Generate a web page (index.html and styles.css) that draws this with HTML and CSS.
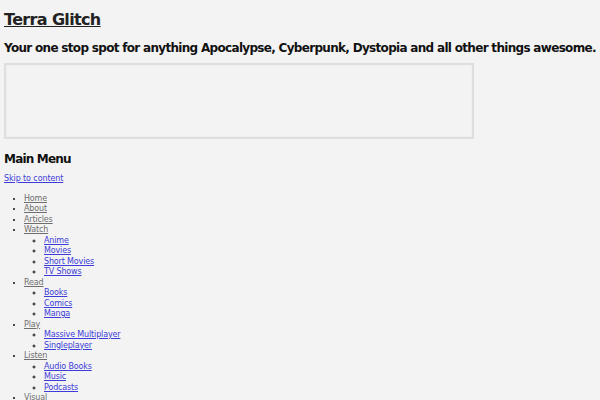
FILE: index.html
```html
<!DOCTYPE html>
<html>
<head>
<meta charset="utf-8">
<link rel="stylesheet" href="styles.css">
</head>
<body>
<header class="site-header">
  <h1 class="site-title"><a href="#">Terra Glitch</a></h1>
  <h2 class="site-desc">Your one stop spot for anything Apocalypse, Cyberpunk, Dystopia and all other things awesome.</h2>
  <div class="ad-frame"></div>
</header>
<nav class="main-nav">
  <h3 class="menu-title">Main Menu</h3>
  <a class="skip" href="#">Skip to content</a>
  <ul class="menu">
    <li><a href="#">Home</a></li>
    <li><a href="#">About</a></li>
    <li><a href="#">Articles</a></li>
    <li><a href="#">Watch</a>
      <ul class="sub">
        <li><a href="#">Anime</a></li>
        <li><a href="#">Movies</a></li>
        <li><a href="#">Short Movies</a></li>
        <li><a href="#">TV Shows</a></li>
      </ul>
    </li>
    <li><a href="#">Read</a>
      <ul class="sub">
        <li><a href="#">Books</a></li>
        <li><a href="#">Comics</a></li>
        <li><a href="#">Manga</a></li>
      </ul>
    </li>
    <li><a href="#">Play</a>
      <ul class="sub">
        <li><a href="#">Massive Multiplayer</a></li>
        <li><a href="#">Singleplayer</a></li>
      </ul>
    </li>
    <li><a href="#">Listen</a>
      <ul class="sub">
        <li><a href="#">Audio Books</a></li>
        <li><a href="#">Music</a></li>
        <li><a href="#">Podcasts</a></li>
      </ul>
    </li>
    <li><a href="#">Visual</a></li>
  </ul>
</nav>
</body>
</html>
```
FILE: styles.css
```css
html { background: #f3f3f3; }
body {
  margin: 0;
  padding: 4px;
  font-family: "DejaVu Sans", sans-serif;
  color: #111;
  background: #f3f3f3;
}
.site-title {
  margin: 6px 0 0;
  font-size: 16px;
  line-height: 20px;
  font-weight: bold;
  letter-spacing: -0.65px;
}
.site-title a { color: #222; text-decoration: underline; }
.site-desc {
  margin: 10px 0 0;
  font-size: 12px;
  line-height: 16px;
  font-weight: bold;
  color: #111;
  letter-spacing: -0.69px;
  white-space: nowrap;
}
.ad-frame {
  margin-top: 7px;
  width: 466px;
  height: 72px;
  border: 2px solid #dedede;
  box-shadow: inset 0 0 0 1px #efefef;
}
.menu-title {
  margin: 12px 0 0;
  font-size: 12px;
  line-height: 16px;
  font-weight: bold;
  letter-spacing: -0.8px;
}
.skip {
  display: block;
  width: max-content;
  margin-top: 7px;
  font-size: 8px;
  line-height: 10.5px;
  letter-spacing: -0.1px;
  color: #3c3cd8;
}
.menu {
  margin: 9px 0 0;
  padding-left: 20px;
  font-size: 8px;
  line-height: 10.5px;
  letter-spacing: -0.15px;
  list-style: disc;
}
.menu > li > a { color: #6e6e6e; }
.sub {
  margin: 0;
  padding-left: 20px;
  list-style: circle;
}
.sub a { color: #3c3cd8; }
```
